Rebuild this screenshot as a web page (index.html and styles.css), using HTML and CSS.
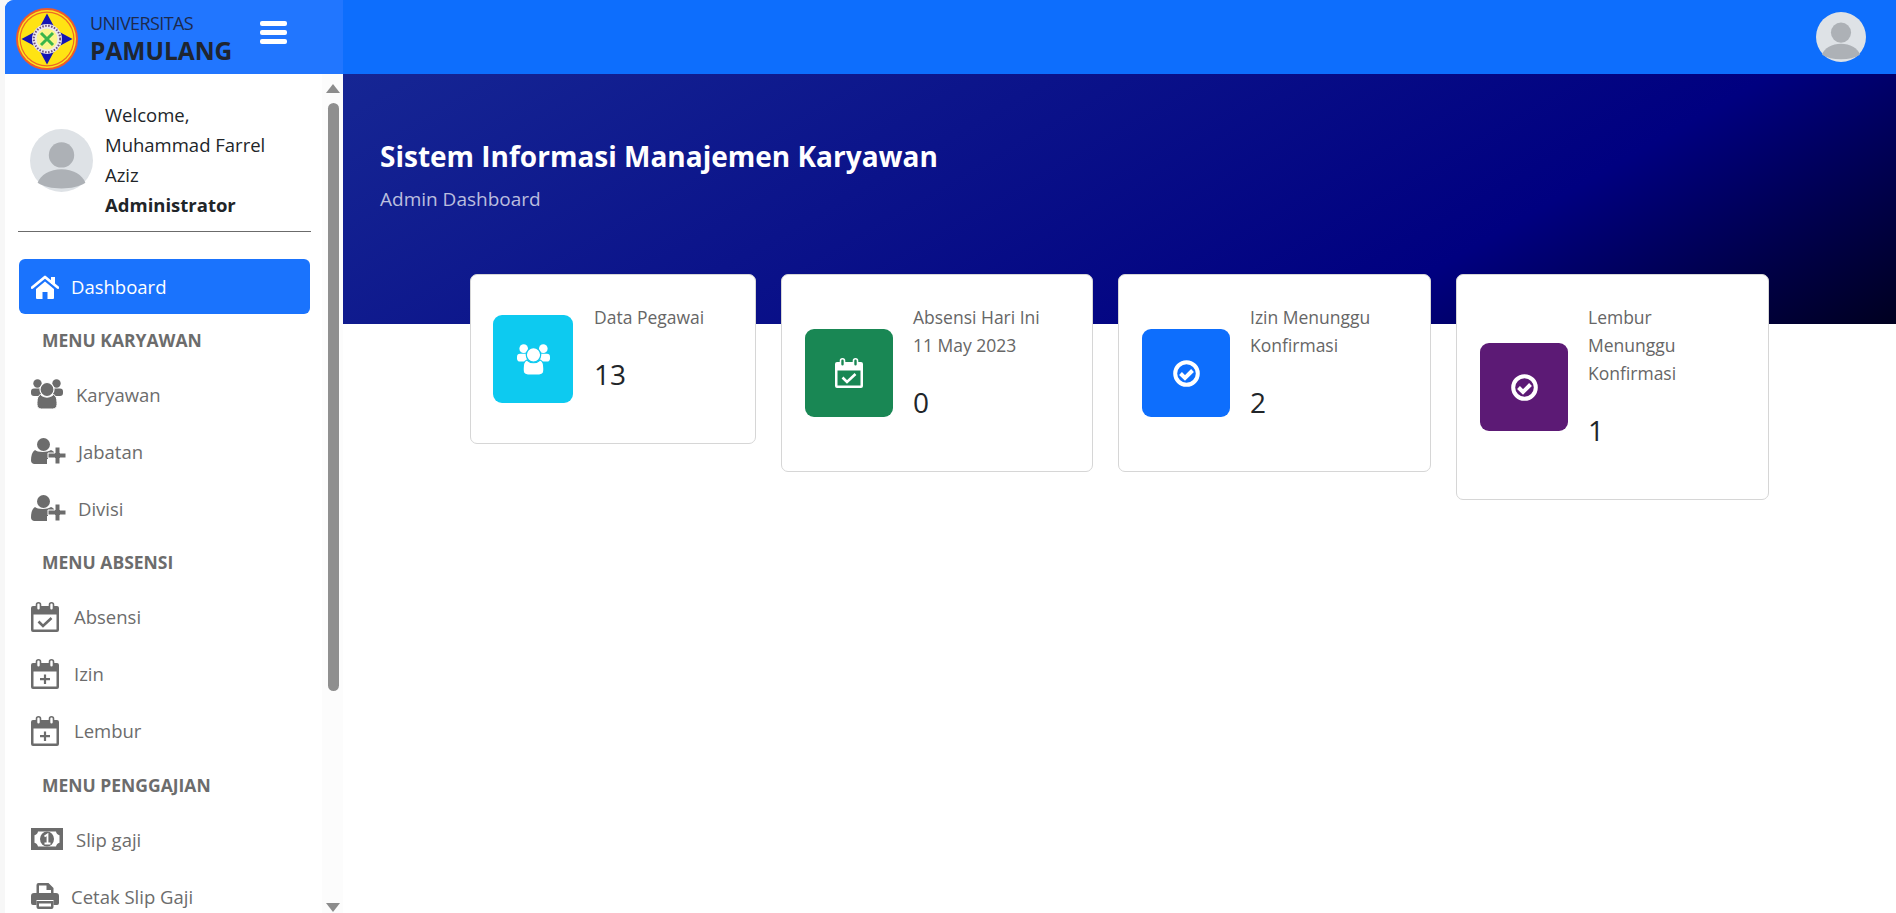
FILE: index.html
```html
<!DOCTYPE html>
<html lang="id">
<head>
    <meta charset="UTF-8">
    <meta name="viewport" content="width=device-width, initial-scale=1.0">
    <title>Sistem Informasi Manajemen Karyawan</title>
    <link rel="stylesheet" href="styles.css">
</head>
<body>
    <svg class="icon-defs" xmlns="http://www.w3.org/2000/svg">
        <symbol id="i-home" viewBox="0 0 28 24">
            <path d="M20 2h4v7h-4z"/>
            <path d="M5 14 14 6.500 23 14v9a1 1 0 0 1-1 1h-5.500v-7h-5v7H6a1 1 0 0 1-1-1z"/>
            <path d="M1.200 12.500 14 2l12.800 10.500" fill="none" stroke="currentColor" stroke-width="2.800" stroke-linecap="round" stroke-linejoin="round"/>
        </symbol>
        <symbol id="i-users" viewBox="0 0 32 30">
            <circle cx="6.500" cy="4.500" r="4.200"/>
            <circle cx="25.500" cy="4.500" r="4.200"/>
            <path d="M3 9.500h7v7.500H3a3 3 0 0 1-3-3v-1.500a3 3 0 0 1 3-3zM22 9.500h7a3 3 0 0 1 3 3V14a3 3 0 0 1-3 3h-7z"/>
            <circle cx="16" cy="10.500" r="7" style="stroke: var(--gap)" stroke-width="1.200"/>
            <path d="M9.500 15.500c3.500 3.500 9.500 3.500 13 0 2.500 1 3.500 4 3.500 8v2c0 3-2 4.500-4.500 4.500h-11C8 30 6 28.500 6 25.500v-2c0-4 1-7 3.500-8z" style="stroke: var(--gap)" stroke-width="1"/>
        </symbol>
        <symbol id="i-user-plus" viewBox="0 0 35 26">
            <circle cx="12.500" cy="6.500" r="6.500"/>
            <path d="M4 12c2 2.500 13 2.500 16 0 2 .8 3.500 2 4 4H17v5h-1v5H3.500C1.500 26 0 24.500 0 22.500 0 18 1 14 4 12z"/>
            <path d="M24 9h5v6h6v5h-6v6h-5v-6h-7v-5h7z" style="stroke: var(--gap)" stroke-width="1"/>
        </symbol>
        <symbol id="i-cal-check" viewBox="0 0 28 30">
            <path fill-rule="evenodd" d="M2 4h24a2 2 0 0 1 2 2v22a2 2 0 0 1-2 2H2a2 2 0 0 1-2-2V6a2 2 0 0 1 2-2zm.500 8.500v15h23v-15z"/>
            <rect x="5.500" y=".8" width="4" height="7.500" rx="2" style="fill: var(--gap)" stroke="currentColor" stroke-width="1.600"/>
            <rect x="18.500" y=".8" width="4" height="7.500" rx="2" style="fill: var(--gap)" stroke="currentColor" stroke-width="1.600"/>
            <path d="M7.500 19.500l4.500 4.500 8.500-8" fill="none" stroke="currentColor" stroke-width="2.600"/>
        </symbol>
        <symbol id="i-cal-plus" viewBox="0 0 28 30">
            <path fill-rule="evenodd" d="M2 4h24a2 2 0 0 1 2 2v22a2 2 0 0 1-2 2H2a2 2 0 0 1-2-2V6a2 2 0 0 1 2-2zm.500 8.500v15h23v-15z"/>
            <rect x="5.500" y=".8" width="4" height="7.500" rx="2" style="fill: var(--gap)" stroke="currentColor" stroke-width="1.600"/>
            <rect x="18.500" y=".8" width="4" height="7.500" rx="2" style="fill: var(--gap)" stroke="currentColor" stroke-width="1.600"/>
            <path d="M14 15.500v9.500M9 20.200h10" fill="none" stroke="currentColor" stroke-width="2.200"/>
        </symbol>
        <symbol id="i-money" viewBox="0 0 32 22">
            <path fill-rule="evenodd" d="M0 0h32v22H0zM7 3.500c-.300 2-1.800 3.500-3.500 3.800v7.400c1.700.3 3.200 1.800 3.500 3.800h18c.3-2 1.800-3.500 3.500-3.800V7.300C26.800 7 25.300 5.500 25 3.500z"/>
            <ellipse cx="16" cy="11" rx="7" ry="7.500"/>
            <path d="M13.500 8.500l3-2v9M13.500 15.500h6" fill="none" style="stroke: var(--gap)" stroke-width="1.800"/>
        </symbol>
        <symbol id="i-print" viewBox="0 0 28 26">
            <path fill-rule="evenodd" d="M5.500 11V2a2 2 0 0 1 2-2h10l5 5v6h-2.500V7h-4.500V2.500H8V11z"/>
            <path d="M3 10h22a3 3 0 0 1 3 3v7a2 2 0 0 1-2 2h-3.500v-5h-17v5H2a2 2 0 0 1-2-2v-7a3 3 0 0 1 3-3z"/>
            <path fill-rule="evenodd" d="M5.500 18h17v6a2 2 0 0 1-2 2h-13a2 2 0 0 1-2-2zM8 20.500v3h12v-3z"/>
        </symbol>
        <symbol id="i-check" viewBox="0 0 27 27">
            <circle cx="13.500" cy="13.500" r="11.300" fill="none" stroke="currentColor" stroke-width="4"/>
            <path d="M7.500 13.500l4.500 4.500 7.500-7.500" fill="none" stroke="currentColor" stroke-width="4"/>
        </symbol>
        <symbol id="i-avatar" viewBox="0 0 62 62">
            <circle cx="31" cy="31" r="31" fill="#dee2e6"/>
            <circle cx="31" cy="25.500" r="12.500" fill="#adb1b6"/>
            <path d="M7.500 53C10 45 20 39.500 31 39.500S52 45 54.500 53c-6 4-14 5.500-23.500 5.500S13.500 57 7.500 53z" fill="#adb1b6"/>
        </symbol>
    </svg>

    <div class="app">
        <header class="topbar">
            <div class="brand">
                <svg class="logo" viewBox="0 0 62 62">
                    <circle cx="31" cy="31" r="31" fill="#f05a28"/>
                    <circle cx="31" cy="31" r="29" fill="#fde61e"/>
                    <circle cx="31" cy="31" r="27.500" fill="#ee6a24"/>
                    <circle cx="31" cy="31" r="26.300" fill="#ffe313"/>
                    <path d="M20 20h22v22H20z" fill="#8d7fa8"/>
                    <path d="M31 5.500l7 13H24zM56.500 31l-13 7V24zM31 56.500l-7-13h14zM5.500 31l13-7v14z" fill="#1414b4"/>
                    <circle cx="31" cy="31" r="15" fill="#ece8ee"/>
                    <circle cx="31" cy="31" r="13.200" fill="none" stroke="#6b4d80" stroke-width="2" stroke-dasharray="1.500 1.500"/>
                    <circle cx="31" cy="31" r="10.500" fill="#fbf58a"/>
                    <path d="M25 25l12 12M37 25 25 37" stroke="#39b54a" stroke-width="3"/>
                </svg>
                <div class="brand-text">
                    <span class="brand-top">UNIVERSITAS</span>
                    <span class="brand-name">PAMULANG</span>
                </div>
                <div class="burger"><span></span><span></span><span></span></div>
            </div>
            <svg class="top-avatar"><use href="#i-avatar"/></svg>
        </header>

        <div class="layout">
            <aside class="sidebar">
                <div class="side-inner">
                    <div class="profile">
                        <svg class="profile-avatar"><use href="#i-avatar"/></svg>
                        <div class="profile-text">
                            Welcome,<br>Muhammad Farrel<br>Aziz<br><strong>Administrator</strong>
                        </div>
                    </div>
                    <hr class="side-line">
                    <nav class="menu">
                        <a class="menu-item active"><svg class="ic-home"><use href="#i-home"/></svg>Dashboard</a>
                        <div class="menu-label">MENU KARYAWAN</div>
                        <a class="menu-item"><svg class="ic-users"><use href="#i-users"/></svg>Karyawan</a>
                        <a class="menu-item"><svg class="ic-plus"><use href="#i-user-plus"/></svg>Jabatan</a>
                        <a class="menu-item"><svg class="ic-plus"><use href="#i-user-plus"/></svg>Divisi</a>
                        <div class="menu-label">MENU ABSENSI</div>
                        <a class="menu-item"><svg class="ic-cal"><use href="#i-cal-check"/></svg>Absensi</a>
                        <a class="menu-item"><svg class="ic-cal"><use href="#i-cal-plus"/></svg>Izin</a>
                        <a class="menu-item"><svg class="ic-cal"><use href="#i-cal-plus"/></svg>Lembur</a>
                        <div class="menu-label">MENU PENGGAJIAN</div>
                        <a class="menu-item"><svg class="ic-money"><use href="#i-money"/></svg>Slip gaji</a>
                        <a class="menu-item"><svg class="ic-print"><use href="#i-print"/></svg>Cetak Slip Gaji</a>
                    </nav>
                </div>
                <div class="scrollbar">
                    <div class="arrow-up"></div>
                    <div class="thumb"></div>
                    <div class="arrow-down"></div>
                </div>
            </aside>

            <main class="content">
                <section class="banner">
                    <h1>Sistem Informasi Manajemen Karyawan</h1>
                    <p>Admin Dashboard</p>
                </section>
                <section class="cards">
                    <div class="card">
                        <div class="card-icon narrow bg-cyan"><svg class="ic-users-lg"><use href="#i-users"/></svg></div>
                        <div class="card-body">
                            <div class="card-title">Data Pegawai</div>
                            <div class="card-value">13</div>
                        </div>
                    </div>
                    <div class="card">
                        <div class="card-icon bg-green"><svg class="ic-cal"><use href="#i-cal-check"/></svg></div>
                        <div class="card-body">
                            <div class="card-title">Absensi Hari Ini<br>11 May 2023</div>
                            <div class="card-value">0</div>
                        </div>
                    </div>
                    <div class="card">
                        <div class="card-icon bg-blue"><svg class="ic-check"><use href="#i-check"/></svg></div>
                        <div class="card-body">
                            <div class="card-title">Izin Menunggu<br>Konfirmasi</div>
                            <div class="card-value">2</div>
                        </div>
                    </div>
                    <div class="card">
                        <div class="card-icon bg-purple"><svg class="ic-check"><use href="#i-check"/></svg></div>
                        <div class="card-body">
                            <div class="card-title">Lembur<br>Menunggu<br>Konfirmasi</div>
                            <div class="card-value">1</div>
                        </div>
                    </div>
                </section>
            </main>
        </div>
    </div>
</body>
</html>
```

FILE: styles.css
```css
* {
    box-sizing: border-box;
}
body {
    margin: 0;
    height: 100vh;
    overflow: hidden;
    padding-left: 5px;
    background-color: #f7f7f7;
    font-family: "Open Sans", "Noto Sans", Arial, sans-serif;
    color: #212529;
}
svg {
    fill: currentColor;
    flex: none;
}
.icon-defs {
    display: none;
}
.app {
    height: 100%;
    display: flex;
    flex-direction: column;
    background: white;
    border-top-left-radius: 9px;
    overflow: hidden;
}

/* top bar */
.topbar {
    flex: none;
    height: 74px;
    display: flex;
    align-items: center;
    justify-content: space-between;
    background-color: #0d6efd;
    padding-right: 30px;
}
.brand {
    width: 338px;
    height: 100%;
    display: flex;
    align-items: center;
    padding-left: 11px;
    background-color: #2176ff;
}
.logo {
    width: 62px;
    height: 62px;
    margin-top: 3px;
}
.brand-text {
    width: 170px;
    margin: 10px 0 0 12px;
    display: flex;
    flex-direction: column;
    color: #1d2a4d;
}
.brand-top {
    font-size: 18px;
    letter-spacing: -0.6px;
    line-height: 21px;
    margin-top: -4px;
}
.brand-name {
    font-size: 24.500px;
    font-weight: 700;
    line-height: 34px;
    color: #1f2530;
}
.burger {
    width: 27px;
    display: flex;
    flex-direction: column;
    gap: 4px;
    margin-top: -10px;
}
.burger span {
    height: 5px;
    border-radius: 2px;
    background: white;
}
.top-avatar {
    width: 50px;
    height: 50px;
}

.layout {
    flex: 1;
    min-height: 0;
    display: flex;
}

/* sidebar */
.sidebar {
    width: 338px;
    flex: none;
    display: flex;
    background: white;
    --gap: white;
}
.side-inner {
    flex: 1;
    overflow: hidden;
    padding: 26px 12px 0 13px;
}
.profile {
    display: flex;
    align-items: center;
    gap: 12px;
    padding-left: 12px;
    font-size: 18.500px;
    line-height: 30px;
}
.profile-avatar {
    width: 63px;
    height: 63px;
}
.side-line {
    margin: 11px 0 27px;
    width: 293px;
    border: 0;
    border-top: 1px solid #6b6b6b;
}
.menu-item {
    height: 57px;
    display: flex;
    align-items: center;
    gap: 13px;
    padding-left: 13px;
    font-size: 18.500px;
    color: #6c6c6c;
}
.menu-item .ic-cal {
    margin-right: 2px;
}
.menu-item .ic-plus {
    margin-right: -1px;
}
.menu-item .ic-print, .menu-item .ic-home {
    margin-right: -1px;
}
.menu-item.active {
    width: 291px;
    height: 55px;
    margin-left: 1px;
    padding-left: 12px;
    border-radius: 6px;
    background-color: #1a73fd;
    color: white;
}
.menu-label {
    height: 51.500px;
    display: flex;
    align-items: center;
    padding-left: 24px;
    font-size: 17.500px;
    font-weight: 700;
    color: #6c6c6c;
}
.ic-home { width: 28px; height: 24px; }
.ic-users { width: 32px; height: 30px; }
.ic-plus { width: 35px; height: 26px; }
.ic-cal { width: 28px; height: 30px; }
.ic-money { width: 32px; height: 22px; }
.ic-print { width: 28px; height: 26px; }
.ic-users-lg { width: 33px; height: 31px; }
.ic-check { width: 27px; height: 27px; }

/* scrollbar */
.scrollbar {
    flex: none;
    width: 21px;
    padding: 10px 4px 1px 5px;
    display: flex;
    flex-direction: column;
    align-items: center;
    background-color: #fcfcfc;
}
.arrow-up, .arrow-down {
    width: 0;
    height: 0;
    border-left: 7px solid transparent;
    border-right: 7px solid transparent;
}
.arrow-up {
    border-bottom: 9px solid #8c8c8c;
}
.arrow-down {
    margin-top: auto;
    border-top: 9px solid #8c8c8c;
}
.thumb {
    width: 11px;
    height: 588px;
    margin-top: 10px;
    border-radius: 6px;
    background-color: #8f8f8f;
}

/* main area */
.content {
    flex: 1;
    min-width: 0;
}
.banner {
    height: 250px;
    padding: 62px 37px 0;
    background: linear-gradient(150deg, #162694 0%, #000080 72%, #000020 100%);
    color: white;
}
.banner h1 {
    margin: 0;
    font-size: 28px;
    line-height: 41px;
    font-weight: 700;
}
.banner p {
    margin: 7px 0 0;
    font-size: 19px;
    line-height: 30px;
    color: rgba(255, 255, 255, 0.72);
}
.cards {
    margin: -50px 0 0 127px;
    display: grid;
    grid-template-columns: 286px 312px 313px 313px;
    column-gap: 25px;
    align-items: start;
}
.card {
    display: flex;
    align-items: center;
    padding: 28px 23px;
    gap: 20px;
    background: white;
    border: 1px solid #d6d6d6;
    border-radius: 7px;
}
.card-icon {
    flex: none;
    width: 88px;
    height: 88px;
    display: flex;
    align-items: center;
    justify-content: center;
    border-radius: 9px;
    color: white;
}
.card-icon.narrow {
    width: 80px;
    margin: 0 1px 0 -1px;
}
.bg-cyan { background-color: #0dcaf0; --gap: #0dcaf0; }
.bg-green { background-color: #198754; --gap: #198754; }
.bg-blue { background-color: #0d6efd; --gap: #0d6efd; }
.bg-purple { background-color: #5c1a75; --gap: #5c1a75; }
.card-title {
    font-size: 17.500px;
    line-height: 28px;
    color: #666;
}
.card-value {
    margin-top: 25px;
    margin-bottom: 23px;
    font-size: 28px;
    line-height: 36px;
}
```
